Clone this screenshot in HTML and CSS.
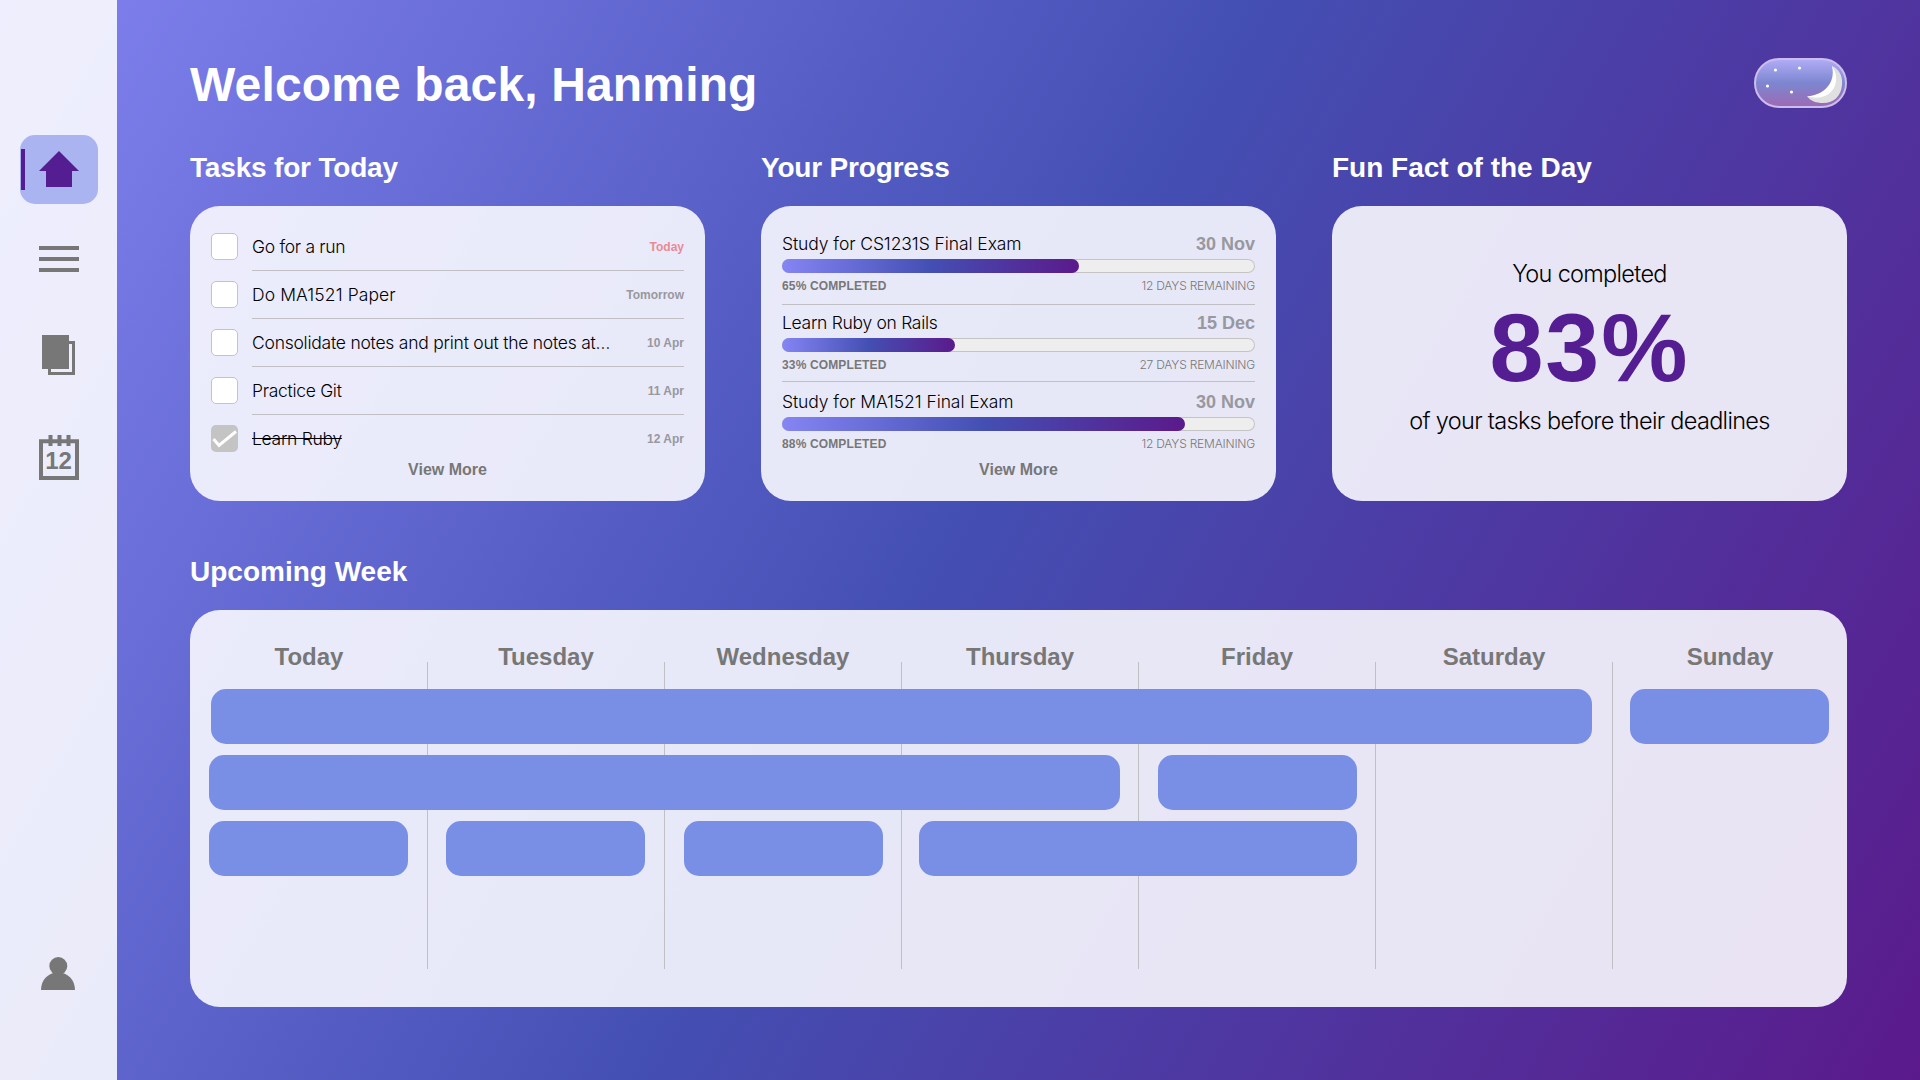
FILE: index.html
```html
<!DOCTYPE html>
<html lang="en">
<head>
<meta charset="utf-8">
<title>Dashboard</title>
<link rel="stylesheet" href="styles.css">
</head>
<body>
<div class="app">
  <nav class="sidebar">
    <a class="nav-item active" aria-label="Home"><svg width="40" height="36" viewBox="0 0 40 36"><path d="M20 0 40 20H33V36H7V20H0Z"/></svg></a>
    <a class="nav-item nav-list" aria-label="Tasks"><svg width="40" height="26" viewBox="0 0 40 26"><path d="M0 0H40V4H0ZM0 11H40V15H0ZM0 22H40V26H0Z"/></svg></a>
    <a class="nav-item nav-notes" aria-label="Notes"><svg width="33" height="40" viewBox="0 0 33 40"><path d="M0 0H27V34H0Z"/><path d="M27 6H33V40H6V34H9V37H30V9H27Z"/></svg></a>
    <a class="nav-item nav-calendar" aria-label="Calendar"><svg width="40" height="45" viewBox="0 0 40 45"><path fill-rule="evenodd" d="M0 4.3H40V45H0ZM4 8.3V41H36V8.3Z"/><path d="M9.5 0H13.5V11H9.5ZM18.5 0H22.5V11H18.5ZM27.5 0H31.5V11H27.5Z"/><text x="19.6" y="34.2" text-anchor="middle">12</text></svg></a>
    <a class="nav-item nav-profile" aria-label="Profile"><svg width="34" height="33" viewBox="0 0 34 33"><circle cx="17.3" cy="9" r="9"/><path d="M0 33C0 23 7 15.500 17 15.500S34 23 34 33Z"/></svg></a>
  </nav>
  <main class="main">
    <header class="header">
      <h1>Welcome back, Hanming</h1>
      <div class="theme-toggle">
        <svg width="89" height="46" viewBox="0 0 89 46">
          <g fill="#fff"><circle cx="19.5" cy="10" r="1.6"/><circle cx="43.5" cy="8" r="1.6"/><circle cx="11.5" cy="26" r="1.6"/><circle cx="35.5" cy="32" r="1.6"/></g>
          <path fill="#e0e0e0" d="M76 6C83 9 87 16 86 25C85 36 78 43 67 43C60 43 55 41 51 36.500C68 36 82 24 76 6Z"/>
          <path fill="#fff" d="M76 6C86 20 78 43 51 36.500C68 35 80 23 76 6Z"/>
        </svg>
      </div>
    </header>
    <div class="overview">
      <section>
        <h2 class="tight">Tasks for Today</h2>
        <div class="card tasks">
          <ul class="task-list">
            <li><span class="check"></span><div class="task"><span class="light">Go for a run</span><span class="due today">Today</span></div></li>
            <li><span class="check"></span><div class="task"><span class="light model">Do MA1521 Paper</span><span class="due">Tomorrow</span></div></li>
            <li><span class="check"></span><div class="task"><span class="light long">Consolidate notes and print out the notes at…</span><span class="due">10 Apr</span></div></li>
            <li><span class="check"></span><div class="task"><span class="light">Practice Git</span><span class="due">11 Apr</span></div></li>
            <li><span class="check checked"><svg width="27" height="27" viewBox="0 0 27 27"><path d="M2.500 14 8 20.500 25 6.500" fill="none" stroke="#fff" stroke-width="3"/></svg></span><div class="task"><span class="light done">Learn Ruby</span><span class="due">12 Apr</span></div></li>
          </ul>
          <a class="more">View More</a>
        </div>
      </section>
      <section>
        <h2 class="tight">Your Progress</h2>
        <div class="card progress">
          <div class="goal">
            <div class="goal-head"><span class="light exam">Study for CS1231S Final Exam</span><span class="date">30 Nov</span></div>
            <div class="track"><div class="fill" style="width:62.8%"></div></div>
            <div class="goal-foot"><b>65% COMPLETED</b><span class="remaining">12 DAYS REMAINING</span></div>
          </div>
          <div class="goal">
            <div class="goal-head"><span class="light">Learn Ruby on Rails</span><span class="date">15 Dec</span></div>
            <div class="track"><div class="fill" style="width:36.6%"></div></div>
            <div class="goal-foot"><b>33% COMPLETED</b><span class="remaining">27 DAYS REMAINING</span></div>
          </div>
          <div class="goal">
            <div class="goal-head"><span class="light exam">Study for MA1521 Final Exam</span><span class="date">30 Nov</span></div>
            <div class="track"><div class="fill" style="width:85.2%"></div></div>
            <div class="goal-foot"><b>88% COMPLETED</b><span class="remaining">12 DAYS REMAINING</span></div>
          </div>
          <a class="more">View More</a>
        </div>
      </section>
      <section>
        <h2>Fun Fact of the Day</h2>
        <div class="card fact">
          <p class="light">You completed</p>
          <strong>83%</strong>
          <p class="light">of your tasks before their deadlines</p>
        </div>
      </section>
    </div>
    <section class="upcoming">
      <h2>Upcoming Week</h2>
      <div class="card week">
        <div class="day c1">Today</div><div class="day c2">Tuesday</div><div class="day c3">Wednesday</div><div class="day c4">Thursday</div><div class="day c5">Friday</div><div class="day c6">Saturday</div><div class="day c7">Sunday</div>
        <div class="rule c1"></div><div class="rule c2"></div><div class="rule c3"></div><div class="rule c4"></div><div class="rule c5"></div><div class="rule c6"></div>
        <div class="event e1"></div><div class="event e2"></div>
        <div class="event e3"></div><div class="event e4"></div>
        <div class="event e5"></div><div class="event e6"></div><div class="event e7"></div><div class="event e8"></div>
      </div>
    </section>
  </main>
</div>
</body>
</html>
```
FILE: styles.css
```css
* { box-sizing: border-box; margin: 0; padding: 0; }
body {
  width: 1920px;
  height: 1080px;
  overflow: hidden;
  font-family: "Liberation Sans", Arial, sans-serif;
  color: #000;
}
.app {
  display: flex;
  height: 1080px;
  background: linear-gradient(120deg, #8282f0 0%, #444fb3 49.5%, #5b1a8b 100%);
}

/* Sidebar */
.sidebar {
  width: 117px;
  padding: 135px 19px 0 20px;
  background: rgba(252, 252, 255, .89);
  display: flex;
  flex-direction: column;
  align-items: center;
}
.nav-item { display: flex; justify-content: center; fill: #777; }
.nav-item svg { display: block; }
.active {
  width: 78px;
  height: 69px;
  padding-top: 16px;
  border-radius: 15px;
  fill: #551d92;
  background: linear-gradient(#551d92, #551d92) 1px 14px / 4px 41px no-repeat #a9b4f1;
}
.nav-list { margin-top: 42px; }
.nav-notes { margin: 63px 1px 0 0; }
.nav-calendar { margin-top: 60px; }
.nav-calendar text { font: bold 24px "Liberation Sans", Arial, sans-serif; }
.nav-profile { margin: 477px 2px 0 0; }

/* Main column */
.main { flex: 1; padding: 57px 73px 0; }
.header { display: flex; justify-content: space-between; height: 94px; }
h1 { font-size: 48px; line-height: 56px; letter-spacing: .14px; color: #fff; white-space: nowrap; }
h2 { font-size: 28px; line-height: 34px; margin-bottom: 21px; color: #fff; white-space: nowrap; }
.tight { letter-spacing: -.18px; }
.theme-toggle {
  width: 93px;
  height: 50px;
  margin-top: 1px;
  border: 2px solid #ccbdec;
  border-radius: 25px;
  background: linear-gradient(#b0abf6, #7d86d0 50%, #9c6bb4);
}
.theme-toggle svg { display: block; }
.overview { display: grid; grid-template-columns: repeat(3, 515px); gap: 56px; }
.card { border-radius: 30px; background: rgba(251, 250, 255, .895); }
.overview .card { height: 295px; }
.light {
  font-family: Inter, "Liberation Sans", sans-serif;
  font-weight: 300;
  font-size: 17.5px;
  letter-spacing: -.3px;
  white-space: nowrap;
}
.model { letter-spacing: .1px; }
.long { letter-spacing: -.24px; }
.exam { letter-spacing: -.08px; }
.more { display: block; text-align: center; font-size: 16px; line-height: 18px; font-weight: bold; color: #777; }

/* Tasks */
.tasks { padding: 17px 21px 0; }
.task-list { list-style: none; }
.task-list li { display: flex; align-items: center; gap: 14px; height: 48px; }
.check { width: 27px; height: 27px; margin-bottom: 1px; border: 1px solid #c4c4c4; border-radius: 5px; background: #fff; }
.checked { border: 0; background: #c4c4c4; }
.checked svg { display: block; }
.task { flex: 1; height: 48px; display: flex; align-items: center; justify-content: space-between; border-bottom: 1px solid #c0c0c4; }
.task-list li:last-child .task { border-color: transparent; }
.done { text-decoration: line-through; }
.due { font-size: 12px; font-weight: bold; color: #98989f; }
.today { color: #e98b95; }
.tasks .more { margin-top: -2px; }

/* Progress */
.progress { padding: 27px 21px 0; }
.goal { height: 79px; }
.goal + .goal { position: relative; }
.goal + .goal::before { content: ""; position: absolute; left: 0; right: 0; top: -8px; height: 1px; background: #c0c0c4; }
.goal:nth-child(3)::before { top: -10px; }
.goal-head { display: flex; justify-content: space-between; align-items: baseline; height: 26px; line-height: 22px; }
.date { font-size: 18px; font-weight: bold; color: #9898a0; }
.track { height: 14px; border-radius: 7px; background: #eee; box-shadow: inset 0 0 0 1px #c4c4c4; }
.fill { height: 14px; border-radius: 7px; background: linear-gradient(90deg, #8585f4, #444fb3 50%, #5b1a8b); }
.goal-foot { display: flex; justify-content: space-between; margin-top: 6px; font-size: 12px; line-height: 14px; color: #777; }
.goal-foot b { letter-spacing: .14px; }
.remaining { font-family: Inter, "Liberation Sans", sans-serif; font-weight: 300; letter-spacing: -.2px; }
.progress .more { margin-top: -9px; }

/* Fun fact */
.fact { padding-top: 53px; text-align: center; }
.fact .light { font-size: 23.5px; line-height: 30px; letter-spacing: -.7px; }
.fact strong { display: block; margin: 5px 0 4px; font-size: 97px; line-height: 108px; letter-spacing: 2px; color: #551d92; }

/* Week */
.upcoming { margin-top: 54px; }
.week {
  height: 397px;
  padding: 33px 0 38px;
  display: grid;
  grid-template-columns: repeat(6, 237px) 235px;
  grid-template-rows: 35px repeat(3, 55px) 1fr;
  row-gap: 11px;
}
.day { grid-row: 1; padding-left: 1px; text-align: center; font-size: 24px; line-height: 28px; font-weight: bold; color: #777; }
.rule { grid-row: 1 / -1; width: 1px; margin: 19px -1px 0 0; justify-self: end; background: #c0c0c4; }
.c1 { grid-column: 1; } .c2 { grid-column: 2; } .c3 { grid-column: 3; } .c4 { grid-column: 4; }
.c5 { grid-column: 5; } .c6 { grid-column: 6; } .c7 { grid-column: 7; }
.event { border-radius: 15px; margin: 0 19px; background: #798fe5; z-index: 1; }
.e1 { grid-area: 2 / 1 / 3 / 7; margin: 0 20px 0 21px; }
.e2 { grid-area: 2 / 7; margin: 0 18px; }
.e3 { grid-area: 3 / 1 / 4 / 5; margin-right: 18px; }
.e4 { grid-area: 3 / 5; margin: 0 18px 0 20px; }
.e5 { grid-area: 4 / 1; }
.e6 { grid-area: 4 / 2; }
.e7 { grid-area: 4 / 3; margin: 0 18px 0 20px; }
.e8 { grid-area: 4 / 4 / 5 / 6; margin: 0 18px; }
```
